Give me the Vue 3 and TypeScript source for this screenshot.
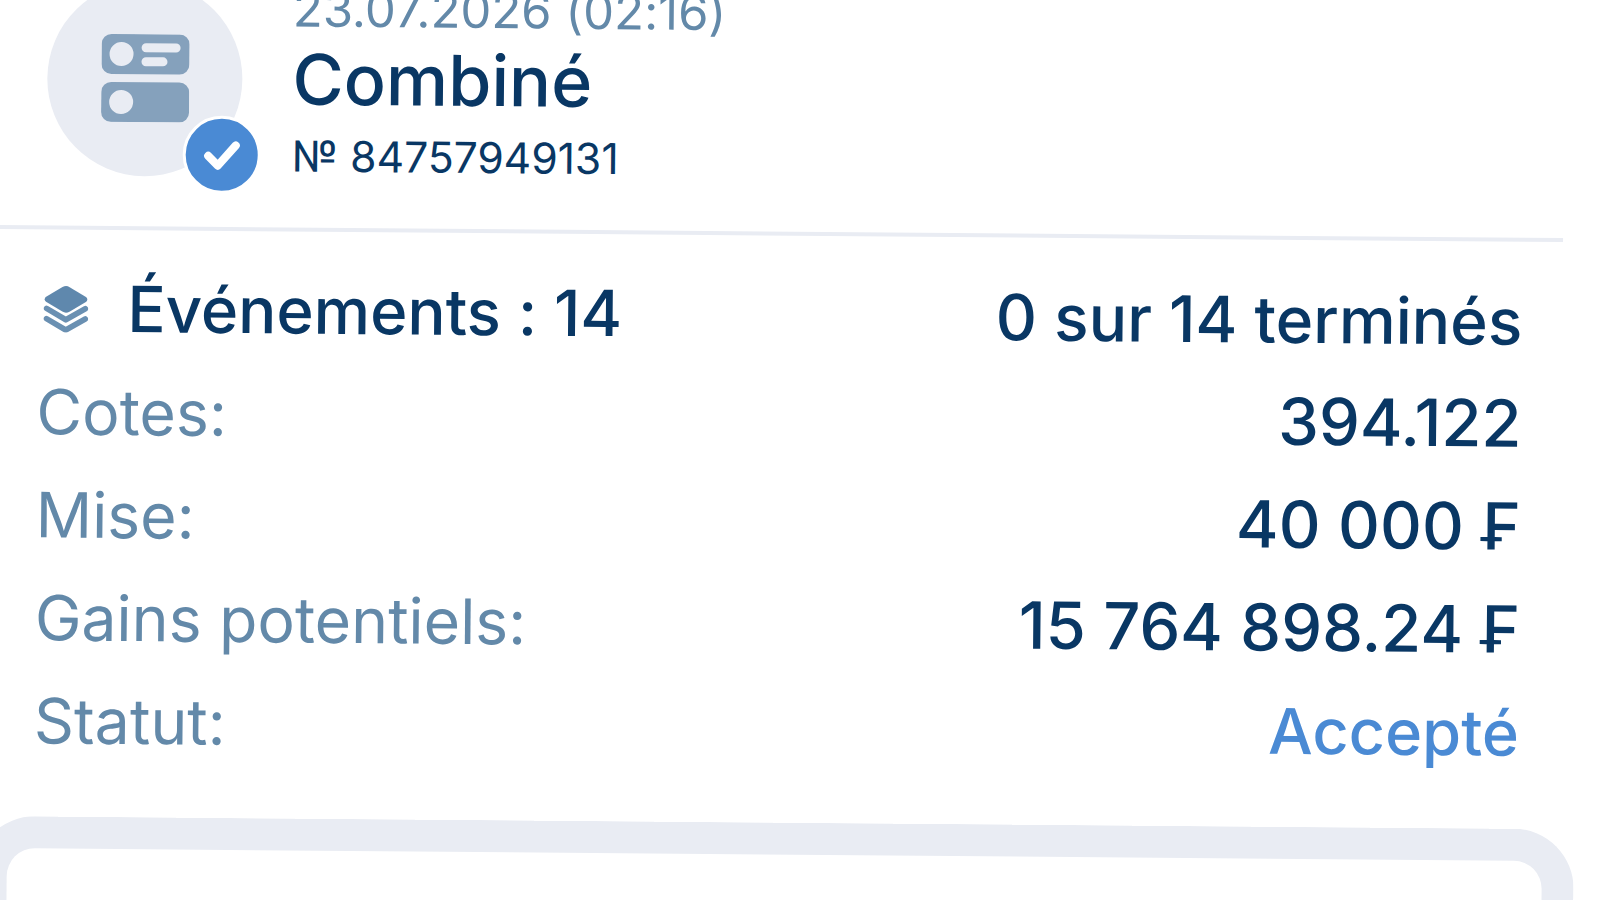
<script setup lang="ts">
interface SummaryRow {
  label: string
  value: string
  accent?: boolean
}

const rows: SummaryRow[] = [
  { label: 'Cotes:', value: '394.122' },
  { label: 'Mise:', value: '40 000 ₣' },
  { label: 'Gains potentiels:', value: '15 764 898.24 ₣' },
  { label: 'Statut:', value: 'Accepté', accent: true },
]
</script>

<template>
  <main class="screen">
    <header class="ticket">
      <div class="avatar">
        <svg class="avatar__icon" viewBox="0 0 88 88" aria-hidden="true">
          <rect x="0" y="0" width="88" height="40" rx="10" fill="#85a1bc" />
          <rect x="0" y="48" width="88" height="40" rx="10" fill="#85a1bc" />
          <circle cx="20" cy="20" r="12" fill="#e9ecf3" />
          <circle cx="20" cy="68" r="12" fill="#e9ecf3" />
          <rect x="40" y="9" width="39" height="9" rx="4.500" fill="#e9ecf3" />
          <rect x="40" y="23" width="26" height="9" rx="4.500" fill="#e9ecf3" />
        </svg>
        <span class="avatar__badge">
          <svg viewBox="0 0 32 32" aria-hidden="true">
            <path d="M10 16.500l4.300 4.300 7.900-9" fill="none" stroke="#fff" stroke-width="3.600" stroke-linecap="round" stroke-linejoin="round" />
          </svg>
        </span>
      </div>
      <div class="ticket__info">
        <div class="ticket__date">23.07.2026 (02:16)</div>
        <div class="ticket__type">Combiné</div>
        <div class="ticket__number">№ 84757949131</div>
      </div>
    </header>

    <hr class="divider" />

    <section class="summary">
      <div class="summary__head">
        <div class="summary__title">
          <svg class="summary__icon" viewBox="0 0 44 46" aria-hidden="true">
            <path d="M18.500 1.500a7 7 0 0 1 7 0l16 9.500a3 3 0 0 1 0 5l-16 9.500a7 7 0 0 1-7 0l-16-9.500a3 3 0 0 1 0-5z" fill="#5f88ad" />
            <path d="M3 22.500l19 11 19-11" fill="none" stroke="#6a90b2" stroke-width="5.500" stroke-linecap="round" stroke-linejoin="round" />
            <path d="M3 32.500l19 11 19-11" fill="none" stroke="#6a90b2" stroke-width="5.500" stroke-linecap="round" stroke-linejoin="round" />
          </svg>
          <span>Événements : 14</span>
        </div>
        <span class="summary__progress">0 sur 14 terminés</span>
      </div>

      <div v-for="row in rows" :key="row.label" class="summary__row">
        <span class="summary__label">{{ row.label }}</span>
        <span class="summary__value" :class="{ 'summary__value--accent': row.accent }">{{ row.value }}</span>
      </div>
    </section>

    <div class="panel"></div>
  </main>
</template>

<style>
html,
body {
  margin: 0;
  background: #fff;
}

html {
  overflow: hidden;
}
</style>

<style scoped>
.screen {
  display: flow-root;
  box-sizing: border-box;
  width: 1600px;
  height: 900px;
  transform: rotate(0.48deg);
  transform-origin: 0 0;
  font-family: Inter, "Liberation Sans", sans-serif;
  font-feature-settings: "calt" 0;
  color: #093764;
}

.ticket {
  display: flex;
  gap: 50px;
  height: 195px;
  margin-top: -20px;
  padding-left: 48px;
}

.avatar {
  position: relative;
  flex: none;
  width: 195px;
  height: 195px;
  border-radius: 50%;
  background: #e9ecf3;
}

.avatar__icon {
  position: absolute;
  top: 53px;
  left: 54px;
  width: 88px;
  height: 88px;
}

.avatar__badge {
  position: absolute;
  left: 136px;
  top: 134px;
  display: flex;
  box-sizing: border-box;
  width: 78px;
  height: 78px;
  border: 3px solid #fff;
  border-radius: 50%;
  background: #4a8ad4;
}

.avatar__badge svg {
  width: 100%;
  height: 100%;
}

.ticket__info {
  padding-top: 3px;
}

.ticket__date {
  font-size: 49px;
  line-height: 48px;
  color: #6389a9;
}

.ticket__type {
  margin-top: 6px;
  font-size: 70px;
  line-height: 80px;
  font-weight: 500;
}

.ticket__number {
  margin-top: 13px;
  font-size: 42.600px;
  line-height: 48px;
}

.divider {
  height: 4px;
  margin: 50px 35px 0 -10px;
  border: 0;
  background: #e9ecf3;
}

.summary {
  padding: 40px 75px 0 40px;
}

.summary__head,
.summary__row {
  display: flex;
  align-items: baseline;
  justify-content: space-between;
  height: 103px;
  font-size: 62.500px;
  line-height: 78px;
}

.summary__title {
  display: flex;
  align-items: center;
  gap: 39px;
  margin-left: 6px;
  font-size: 63.500px;
  font-weight: 500;
}

.summary__icon {
  flex: none;
  width: 45px;
  height: 47px;
}

.summary__progress {
  font-size: 64px;
  font-weight: 500;
}

.summary__label {
  color: #6389a9;
}

.summary__value {
  font-size: 65px;
  font-weight: 500;
}

.summary__value--accent {
  font-size: 63px;
  color: #4a8ad4;
}

.panel {
  box-sizing: border-box;
  height: 90px;
  margin: 32px 19px 0 -18px;
  border: 32px solid #e9ecf3;
  border-bottom: 0;
  border-radius: 60px 60px 0 0;
  background: #fff;
}
</style>
